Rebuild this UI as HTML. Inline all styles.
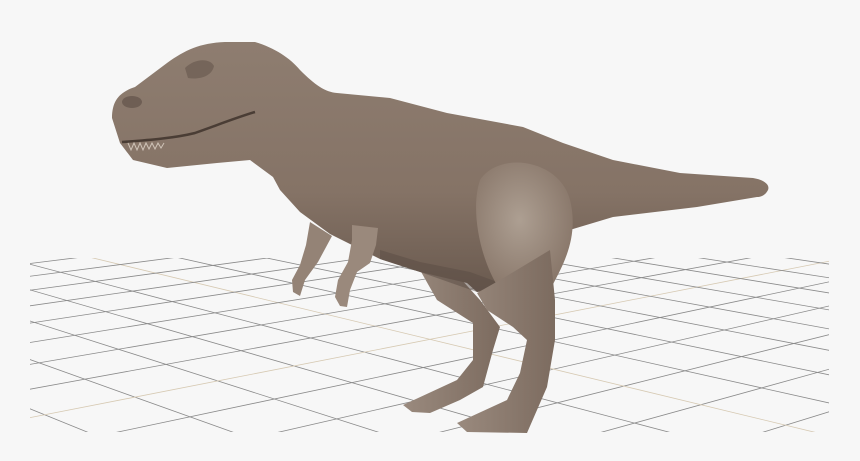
<!DOCTYPE html>
<html><head><meta charset="utf-8"><style>
html,body{margin:0;padding:0;background:#f7f7f7;width:860px;height:461px;overflow:hidden}
svg{position:absolute;left:0;top:0;display:block}
</style></head><body>
<svg id="s" width="860" height="461" viewBox="0 0 860 461">
<defs>
<clipPath id="gc"><rect x="30" y="258" width="799" height="174"/></clipPath>
<radialGradient id="thigh" cx="0.45" cy="0.45" r="0.6">
<stop offset="0" stop-color="#ad9f92"/><stop offset="1" stop-color="#887669"/></radialGradient>
<linearGradient id="bodyg" x1="0" y1="0" x2="0" y2="1">
<stop offset="0" stop-color="#8e7d70"/><stop offset="0.6" stop-color="#857366"/><stop offset="1" stop-color="#6a5a4f"/></linearGradient>
<linearGradient id="legg" x1="0" y1="0" x2="1" y2="0">
<stop offset="0" stop-color="#9a8a7e"/><stop offset="1" stop-color="#7c6b5f"/></linearGradient>
</defs>
<g id="grid" clip-path="url(#gc)"></g>
<path d="M420,270 L437,300 L473,323 L473,360 L457,380 L403,405 L412,412 L430,413 L460,400 L483,387 L493,350 L500,327 L480,300 L460,278 Z" fill="url(#legg)"/>
<path d="M310,222 L332,236 L318,262 L305,280 L300,296 L293,292 L292,280 L300,265 L306,245 Z" fill="#948376"/>
<path d="M112,118 C112,100 120,92 135,87 L167,63 C185,50 200,43 225,42 L255,42 C275,48 290,58 300,70 C315,85 325,92 337,93 L390,98 L447,113 L523,127 L563,143 L613,160 L680,173 L753,178 C765,180 770,185 768,190 C765,196 760,197 757,197 L697,207 L613,217 L563,232 L548,255 L540,285 L477,292 L467,283 L420,272 L380,259 L330,234 L300,212 L280,190 L273,177 L250,160 L217,163 L167,168 L133,160 L120,143 Z" fill="url(#bodyg)"/>
<path d="M380,250 L420,262 L470,272 L500,283 L477,292 L420,272 L380,259 Z" fill="#5a4c43" opacity="0.5"/>
<path d="M480,180 C500,150 560,160 570,200 C580,240 560,270 550,290 L500,290 C480,260 470,210 480,180 Z" fill="url(#thigh)"/>
<path d="M550,250 L555,300 L555,340 L547,387 L527,433 L467,432 L457,423 L507,400 L520,373 L527,340 L513,327 L487,310 L477,293 L500,280 Z" fill="url(#legg)"/>
<path d="M352,225 L378,228 L376,245 L370,263 L357,272 L350,290 L347,307 L340,306 L335,297 L338,280 L348,262 L352,240 Z" fill="#9a897c"/>
<path d="M185,68 C195,58 210,58 214,66 C212,76 200,80 188,78 Z" fill="#75655a"/>
<ellipse cx="132" cy="102" rx="10" ry="6" fill="#6e5e54"/>
<path d="M122,142 C150,140 175,138 195,133 C215,126 235,118 255,112" stroke="#4a3d35" stroke-width="2.5" fill="none"/>
<path d="M128,143 l3,7 l3,-7 l3,7 l3,-7 l3,7 l3,-7 l3,6 l3,-6 l3,6 l3,-6 l3,5 l3,-5" stroke="#cfc3b7" stroke-width="1" fill="none"/>
</svg>
<script>
(function(){
var g=document.getElementById('grid'),ns='http://www.w3.org/2000/svg';
var f=1561,cx=430,yh=0,h=1,th=42*Math.PI/180,z0=4.6,c=Math.cos(th),s=Math.sin(th);
function P(X,Z){var xp=X*c-Z*s,zp=z0+X*s+Z*c;return [cx+f*xp/zp,yh+f*h/zp];}
var st=0.25,R=3.2;
for(var i=-13;i<=13;i++){
 var v=i*st;
 var a=P(v,-R),b=P(v,R),a2=P(-R,v),b2=P(R,v);
 [[a,b],[a2,b2]].forEach(function(p){
  var l=document.createElementNS(ns,'line');
  l.setAttribute('x1',p[0][0]);l.setAttribute('y1',p[0][1]);
  l.setAttribute('x2',p[1][0]);l.setAttribute('y2',p[1][1]);
  l.setAttribute('stroke',i==0?'#d6c9b2':'#8a8a8a');l.setAttribute('stroke-width','0.8');
  g.appendChild(l);
 });
}
})();
</script>
</body></html>
